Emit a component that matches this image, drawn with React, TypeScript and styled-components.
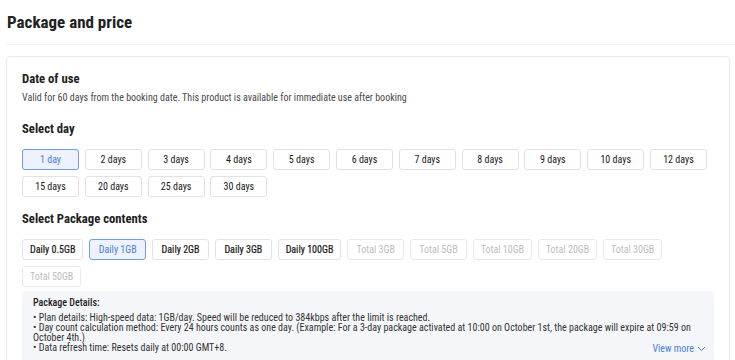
import React from "react";
import styled, { createGlobalStyle } from "styled-components";

const GlobalStyle = createGlobalStyle`
  html, body { margin: 0; padding: 0; background: #ffffff; }
  body { font-family: "Roboto Condensed", "Roboto", "Liberation Sans", sans-serif; color: #212121; }
  * { box-sizing: border-box; }
`;

const Page = styled.div`
  padding: 10px 0 0 6px;
  width: 735px;
  overflow: hidden;
`;

const PageTitle = styled.h1`
  margin: 0 0 10px 1px;
  font-size: 17px;
  line-height: 24px;
  font-weight: 700;
  color: #212121;
`;

const Divider = styled.div`
  height: 1px;
  background: #f0f0f2;
  margin-bottom: 11px;
`;

const Card = styled.section`
  margin-right: 5px;
  border: 1px solid #ebebee;
  border-radius: 4px;
  box-shadow: 0 1px 3px rgba(30, 30, 60, 0.05);
  padding: 14px 15px 20px 15px;
`;

const SectionTitle = styled.h2<{ $gap: number }>`
  margin: 0;
  margin-top: ${(p) => p.$gap}px;
  font-size: 12.7px;
  line-height: 16px;
  font-weight: 700;
  color: #212121;
`;

const Description = styled.p`
  margin: 4px 0 0;
  font-size: 10px;
  line-height: 14px;
  color: #4a4a4a;
`;

const OptionGrid = styled.div`
  margin-top: 12px;
  display: flex;
  flex-wrap: wrap;
  column-gap: 5.8px;
  row-gap: 6px;
`;

type OptionState = "normal" | "active" | "disabled";

const Option = styled.button<{ $state: OptionState; $fixed?: boolean }>`
  height: 21px;
  ${(p) => (p.$fixed ? "width: 57px;" : "min-width: 57px;")}
  padding: 0 7px;
  border-radius: 3px;
  font-family: inherit;
  font-size: 10px;
  line-height: 19px;
  font-weight: 400;
  cursor: pointer;
  white-space: nowrap;
  text-align: center;
  border: 1px solid
    ${(p) =>
      p.$state === "active" ? "#6f9bec" : p.$state === "disabled" ? "#e9e9ec" : "#e2e2e6"};
  background: ${(p) => (p.$state === "active" ? "#edf2fe" : "#ffffff")};
  color: ${(p) =>
    p.$state === "active" ? "#4a7de2" : p.$state === "disabled" ? "#bcbcc2" : "#1a1a1a"};
  ${(p) => (!p.$fixed && p.$state === "normal" ? "-webkit-text-stroke: 0.2px #1a1a1a;" : "")}
`;

const Details = styled.div`
  margin-top: 4px;
  background: #f5f6fa;
  border-radius: 4px;
  padding: 5px 8px 8px 11px;
  color: #333333;
`;

const DetailsTitle = styled.div`
  font-size: 10px;
  line-height: 14px;
  font-weight: 500;
  color: #212121;
  margin-bottom: 3px;
`;

const DetailLine = styled.div`
  font-size: 10px;
  line-height: 10px;
  padding-right: 8px;
`;

const LastRow = styled.div`
  display: flex;
  justify-content: space-between;
  align-items: flex-start;
`;

const ViewMore = styled.span`
  display: inline-flex;
  align-items: center;
  gap: 3px;
  color: #4a7de2;
  font-size: 10px;
  line-height: 10px;
  margin-top: 1px;
  cursor: pointer;
`;

const days = [1, 2, 3, 4, 5, 6, 7, 8, 9, 10, 12, 15, 20, 25, 30];
const packages: { label: string; state: OptionState }[] = [
  { label: "Daily 0.5GB", state: "normal" },
  { label: "Daily 1GB", state: "active" },
  { label: "Daily 2GB", state: "normal" },
  { label: "Daily 3GB", state: "normal" },
  { label: "Daily 100GB", state: "normal" },
  { label: "Total 3GB", state: "disabled" },
  { label: "Total 5GB", state: "disabled" },
  { label: "Total 10GB", state: "disabled" },
  { label: "Total 20GB", state: "disabled" },
  { label: "Total 30GB", state: "disabled" },
  { label: "Total 50GB", state: "disabled" },
];

export default function App() {
  return (
    <>
      <GlobalStyle />
      <Page>
        <PageTitle>Package and price</PageTitle>
        <Divider />
        <Card>
          <SectionTitle $gap={0}>Date of use</SectionTitle>
          <Description>
            Valid for 60 days from the booking date. This product is available for immediate use
            after booking
          </Description>

          <SectionTitle $gap={16}>Select day</SectionTitle>
          <OptionGrid>
            {days.map((d) => (
              <Option key={d} $fixed $state={d === 1 ? "active" : "normal"}>
                {d === 1 ? "1 day" : `${d} days`}
              </Option>
            ))}
          </OptionGrid>

          <SectionTitle $gap={14}>Select Package contents</SectionTitle>
          <OptionGrid>
            {packages.map((p) => (
              <Option key={p.label} $state={p.state}>
                {p.label}
              </Option>
            ))}
          </OptionGrid>

          <Details>
            <DetailsTitle>Package Details:</DetailsTitle>
            <DetailLine>
              • Plan details: High-speed data: 1GB/day. Speed will be reduced to 384kbps after the
              limit is reached.
            </DetailLine>
            <DetailLine>
              • Day count calculation method: Every 24 hours counts as one day. (Example: For a
              3-day package activated at 10:00 on October 1st, the package will expire at 09:59 on
              October 4th.)
            </DetailLine>
            <LastRow>
              <DetailLine>• Data refresh time: Resets daily at 00:00 GMT+8.</DetailLine>
              <ViewMore>
                View more
                <svg width="9" height="6" viewBox="0 0 9 6" fill="none">
                  <path d="M1 1l3.5 3.5L8 1" stroke="#4a7de2" strokeWidth="1" />
                </svg>
              </ViewMore>
            </LastRow>
          </Details>
        </Card>
      </Page>
    </>
  );
}
